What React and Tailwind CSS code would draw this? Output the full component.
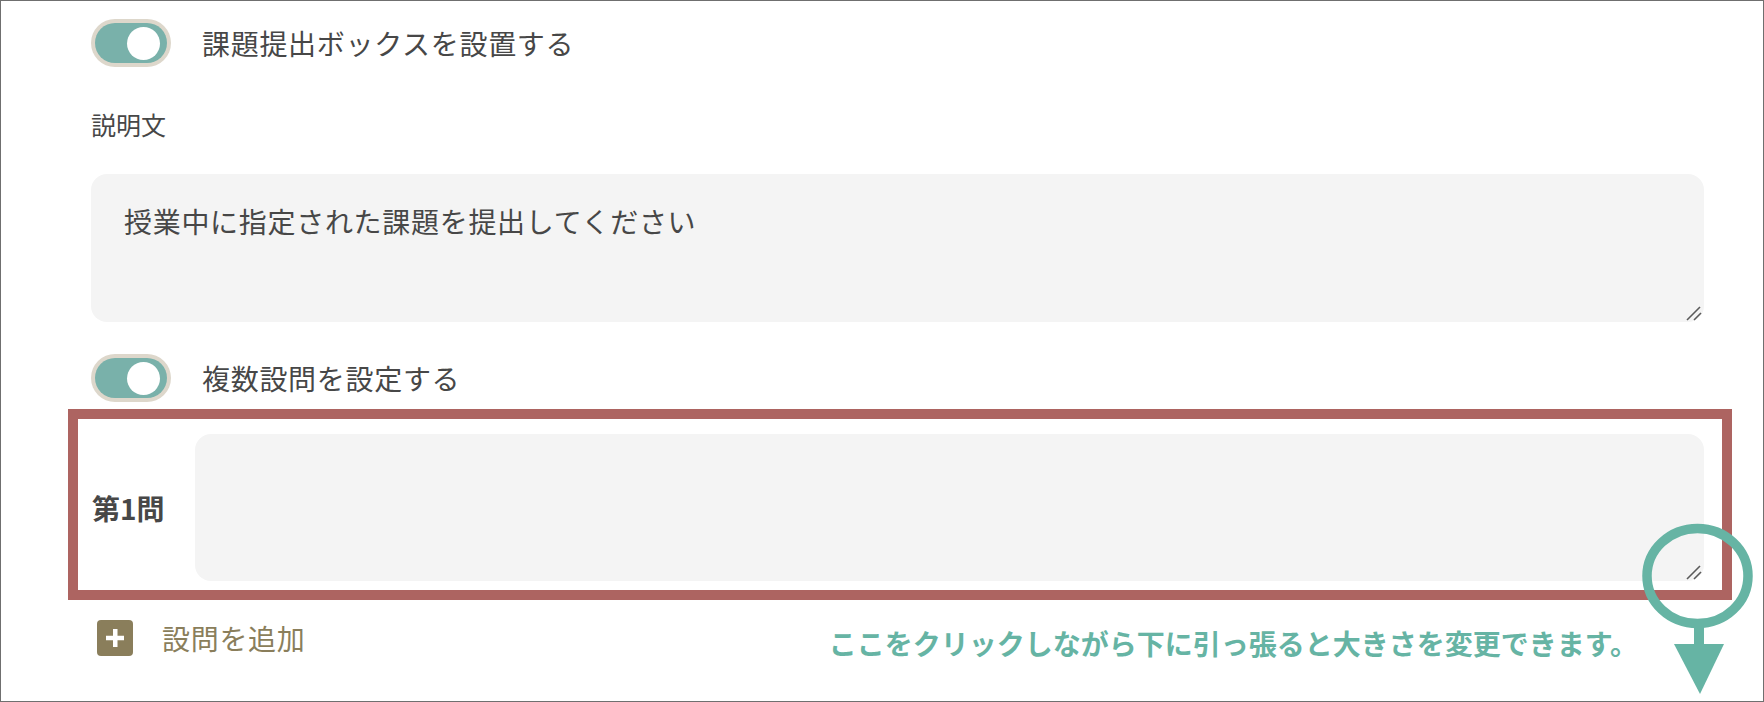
import React from 'react';

const Toggle = () => (
  <div className="w-[80px] h-[48px] rounded-full bg-[#ddd7cb] p-[4px] shrink-0">
    <div className="h-full rounded-full bg-[#79b1aa] flex items-center justify-end pr-[7px]">
      <div className="w-[33px] h-[33px] rounded-full bg-white" />
    </div>
  </div>
);

// Drawn resize grip, laid over the textarea corner
const Grip = () => (
  <svg
    className="absolute right-[2px] bottom-[1px] pointer-events-none"
    width="16"
    height="16"
    viewBox="0 0 16 16"
  >
    <line x1="1" y1="15" x2="14" y2="2" stroke="#5a5a5a" strokeWidth="1.6" />
    <line x1="8" y1="15" x2="15" y2="8" stroke="#5a5a5a" strokeWidth="1.6" />
  </svg>
);

const App = () => {
  return (
    <div
      className="relative h-[702px] w-full border border-[#6f6f6f] bg-white text-[#474747] overflow-hidden"
      style={{ fontFamily: '"Noto Sans CJK JP", "Noto Sans", sans-serif' }}
    >
      <div className="pl-[90px] pr-[59px] pt-[18px]">
        {/* Submission box toggle */}
        <div className="flex items-center gap-[31px] h-[48px]">
          <Toggle />
          <span className="text-[28px] tracking-[0.7px] leading-none">課題提出ボックスを設置する</span>
        </div>

        {/* Description */}
        <div className="mt-[39px] text-[25px] leading-[36px]">説明文</div>
        <div className="relative mt-[32px]">
          <textarea
            className="block w-full h-[148px] bg-[#f4f4f4] rounded-[16px] px-[33px] py-[26px] text-[28px] tracking-[0.7px] leading-[1.5] outline-none resize-none"
            defaultValue="授業中に指定された課題を提出してください"
          />
          <Grip />
        </div>

        {/* Multiple questions toggle */}
        <div className="mt-[32px] flex items-center gap-[31px] h-[48px]">
          <Toggle />
          <span className="text-[28px] tracking-[0.7px] leading-none">複数設問を設定する</span>
        </div>

        {/* Highlighted question row */}
        <div className="mt-[7px] ml-[-23px] mr-[-28px] border-[10px] border-[#ad6461] pl-[14px] pr-[18px] pt-[15px] pb-[9px] flex items-center">
          <div className="w-[103px] shrink-0 text-[28px] font-bold leading-none">第1問</div>
          <div className="relative flex-1">
            <textarea className="block w-full h-[147px] bg-[#f4f4f4] rounded-[16px] px-[24px] py-[20px] text-[28px] outline-none resize-none" />
            <Grip />
          </div>
        </div>

        {/* Add question */}
        <div className="mt-[20px] flex items-center h-[36px]">
          <div className="ml-[6px] w-[36px] h-[36px] rounded-[4px] bg-[#8a7e5b] flex items-center justify-center">
            <svg width="20" height="20" viewBox="0 0 20 20">
              <rect x="8" y="1" width="4.5" height="18" fill="white" />
              <rect x="1" y="7.75" width="18" height="4.5" fill="white" />
            </svg>
          </div>
          <span className="ml-[29px] text-[28px] tracking-[0.7px] leading-none text-[#8a7e5b]">設問を追加</span>
          <span className="ml-auto mr-[66px] mt-[10px] text-[28px] font-bold leading-none text-[#66b4a4]">
            ここをクリックしながら下に引っ張ると大きさを変更できます。
          </span>
        </div>
      </div>

      {/* Annotation circle + arrow over the resize handle */}
      <svg
        className="absolute left-[1640px] top-[521px] pointer-events-none"
        width="114"
        height="176"
        viewBox="0 0 114 176"
      >
        <ellipse cx="56.5" cy="54" rx="50.5" ry="47.5" fill="none" stroke="#66b4a4" strokeWidth="9.5" />
        <rect x="53" y="104" width="10" height="20" fill="#66b4a4" />
        <polygon points="33,122 83,122 59,172" fill="#66b4a4" />
      </svg>
    </div>
  );
};

export default App;
